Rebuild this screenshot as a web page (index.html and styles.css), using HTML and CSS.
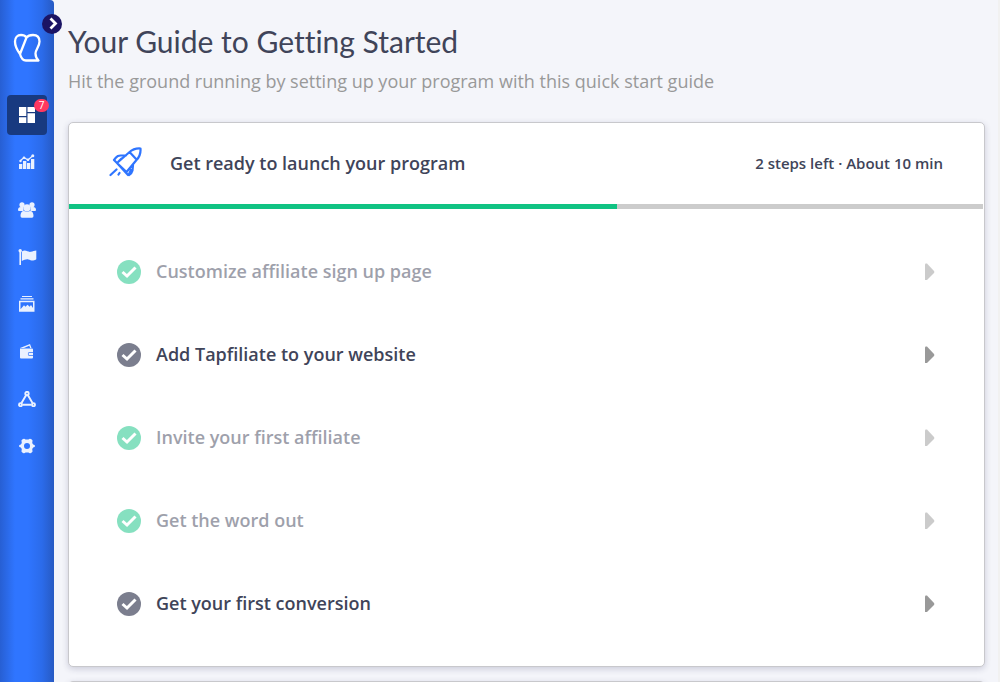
FILE: index.html
```html
<!DOCTYPE html>
<html lang="en">
<head>
<meta charset="utf-8">
<meta name="viewport" content="width=device-width, initial-scale=1">
<title>Your Guide to Getting Started</title>
<link rel="stylesheet" href="styles.css">
</head>
<body>
<svg class="defs" aria-hidden="true">
  <symbol id="check" viewBox="0 0 24 24"><circle cx="12" cy="12" r="12" fill="currentColor"/><path d="M5.500 12l4.500 4 8.500-8.500" fill="none" stroke="#fff" stroke-width="3"/></symbol>
  <symbol id="arrow" viewBox="0 0 10 18"><path d="M0 1.500Q0 .5 1 .5h1L9 8q.8 1 0 2l-7 7H0z" fill="currentColor"/></symbol>
</svg>
<div class="app">
  <aside class="sidebar">
    <a class="logo" href="#" aria-label="Home">
      <svg width="28" height="30" viewBox="0 0 28 30" fill="none" stroke="#fff" stroke-width="2.300" stroke-linejoin="round" stroke-linecap="round"><path d="M7 21C4 17 2 13 2 8.500C2 4.500 4.500 2 8 2c2 0 4 .5 5 2M7 21L13.500 4.500C15 2.500 17 2 20 2c4 0 6.500 2.500 6.500 6.500c0 5-4 8-4 12c0 3 1 5 3 7H13c-3.500 0-5-2.500-6-6.500"/></svg>
    </a>
    <button class="toggle" type="button" aria-label="Expand menu"><svg width="20" height="20" viewBox="0 0 20 20" fill="none" stroke="#fff" stroke-width="2.800"><path d="M8.500 4.500l5 5-5 5"/></svg></button>
    <nav class="menu" aria-label="Main">
      <a class="item active" href="#" aria-label="Dashboard"><svg width="16" height="16" viewBox="0 0 16 16"><path d="M0 0h7.300v9H0zM8.500 0H16v5H8.500zM0 10.200h7.300V16H0zM8.500 6.200H16V16H8.500z"/></svg><span class="badge">7</span></a>
      <a class="item" href="#" aria-label="Reports"><svg width="16" height="16" viewBox="0 0 16 16"><path d="M0 10h3.300v5H0zM4 7h3.300v8H4zM8 9h3.300v6H8zM12 5h3.300v10H12z"/><path d="M1 7l4-3.500L9 6l5-4.500" fill="none" stroke="#fff" stroke-width="1.200"/><circle cx="1.500" cy="7" r="1.200"/><circle cx="5" cy="3.800" r="1.300"/><circle cx="9" cy="5.800" r="1.300"/><circle cx="13.800" cy="1.800" r="1.500"/></svg></a>
      <a class="item" href="#" aria-label="Affiliates"><svg width="18" height="16" viewBox="0 0 18 16"><circle cx="4" cy="2.800" r="2.600"/><circle cx="14" cy="2.800" r="2.600"/><path d="M0 8c0-2 1-3 3-3h2.500v4H1Q0 9 0 8zM18 8c0-2-1-3-3-3h-2.500v4H17q1 0 1-1z"/><circle cx="9" cy="5.800" r="3.600"/><path d="M2.500 14c0-3 1-5 3.500-5 2 1 4 1 6 0 2.500 0 3.500 2 3.500 5q0 1.800-1.500 1.800H4q-1.500 0-1.500-1.800z"/></svg></a>
      <a class="item" href="#" aria-label="Programs"><svg width="19" height="16" viewBox="0 0 19 16"><circle cx="2.200" cy="1.700" r="1.700"/><path d="M1.400 2H3v14H1.400zM3.800 2.500c4-2.500 6 1 9 .3 2-.5 3.500-1.300 5.500-1.300v8.700c-4 2.500-5 1-8 .3-2-.5-4 .5-6.500 1.500z"/></svg></a>
      <a class="item" href="#" aria-label="Assets"><svg width="16" height="16" viewBox="0 0 16 16"><path d="M3 0h10v1H3zM1.500 2.300h13v1.200h-13z"/><path fill-rule="evenodd" d="M0 4.800h15.500v11H0zM1.500 6.300v7l3.500-4 1.500 1.500 2-2 2.200 2L12 9l2 3V6.300z"/></svg></a>
      <a class="item" href="#" aria-label="Payouts"><svg width="16" height="16" viewBox="0 0 16 16"><path d="M1 5L11 1l1.500 4h-1.300L10.300 2.700 5 5z"/><path fill-rule="evenodd" d="M1 5.500h12q1 0 1 1v8q0 1-1 1H2q-1 0-1-1zM10.800 9h3.200v.7h-3.200a1.300 1.300 0 0 0 0 2.600H14v.7h-3.200a2 2 0 0 1 0-4z"/></svg></a>
      <a class="item" href="#" aria-label="Network"><svg class="network" width="18" height="16" viewBox="0 0 18 16" fill="none" stroke="#fff" stroke-width="1.900"><path d="M8.200 4L3.500 12M9.800 4l4.700 8M4.500 13.700h9"/><circle cx="9" cy="2.500" r="1.700"/><circle cx="2.500" cy="13.700" r="1.500"/><circle cx="15.500" cy="13.700" r="1.500"/></svg></a>
      <a class="item" href="#" aria-label="Settings"><svg width="16" height="16" viewBox="0 0 16 16"><path fill-rule="evenodd" d="M4 1q1.500-.8 2.500.5h3Q10.500.2 12 1l1 .8q.9.700.4 2L13.200 5l1 1.500Q16 6.800 16 8t-1.800 1.500l-1 1.500.2 1.200q.5 1.300-.4 2l-1 .8q-1.500.8-2.500-.5h-3Q5.500 15.800 4 15l-1-.8q-.9-.7-.4-2L2.800 11l-1-1.500Q0 9.200 0 8t1.800-1.500l1-1.500-.2-1.200q-.5-1.300.4-2zM8 5a3 3 0 1 0 0 6a3 3 0 0 0 0-6z"/></svg></a>
    </nav>
  </aside>
  <main class="content">
    <h1 class="title">Your Guide to Getting Started</h1>
    <p class="subtitle">Hit the ground running by setting up your program with this quick start guide</p>
    <section class="card">
      <header class="card-head">
        <svg class="rocket" width="34" height="32" viewBox="0 0 34 32" fill="none" stroke="#2f75ff" stroke-width="2.200" stroke-linecap="round" stroke-linejoin="round"><path d="M8 16L20 5.500Q25 1 31.500 1.500q.5 7-4 11.500L17.500 25zM21 5.500L27.500 12.500M17 8.500h-5.500q-3 0-4.500 2l-2 2.500L8 16M9.500 14.500l3-3M8 16l11 12M20 28q3-2 3.500-4.500l.5-5.500M20 27l2-4M7.500 22.500l-6 5.500M10.500 26l-1 1.500"/></svg>
        <h2 class="card-title">Get ready to launch your program</h2>
        <span class="remaining">2 steps left · About 10 min</span>
      </header>
      <div class="progress" role="progressbar" aria-label="Steps completed" aria-valuenow="60" aria-valuemin="0" aria-valuemax="100"><div class="bar" style="width:60%"></div></div>
      <div class="steps">
        <a class="step done" href="#"><svg class="check"><use href="#check"/></svg><span>Customize affiliate sign up page</span><svg class="arrow"><use href="#arrow"/></svg></a>
        <a class="step" href="#"><svg class="check"><use href="#check"/></svg><span>Add Tapfiliate to your website</span><svg class="arrow"><use href="#arrow"/></svg></a>
        <a class="step done" href="#"><svg class="check"><use href="#check"/></svg><span>Invite your first affiliate</span><svg class="arrow"><use href="#arrow"/></svg></a>
        <a class="step done" href="#"><svg class="check"><use href="#check"/></svg><span>Get the word out</span><svg class="arrow"><use href="#arrow"/></svg></a>
        <a class="step" href="#"><svg class="check"><use href="#check"/></svg><span>Get your first conversion</span><svg class="arrow"><use href="#arrow"/></svg></a>
      </div>
    </section>
    <section class="card next"></section>
  </main>
</div>
</body>
</html>
```
FILE: styles.css
```css
* { box-sizing: border-box; }
body {
  margin: 0;
  background: #f4f5fa;
  color: #404459;
  font-family: "Open Sans", "Noto Sans", sans-serif;
}
a { color: inherit; text-decoration: none; }
svg { display: block; flex: none; }
.defs { position: absolute; width: 0; height: 0; }
.app {
  display: flex;
  height: 100vh;
  overflow: hidden;
  border-right: 2px solid #f1f1f1;
}
.sidebar {
  position: relative;
  flex: none;
  width: 54px;
  padding-top: 33px;
  background: linear-gradient(90deg, #275fd3 0, #2f75ff 15px, #2f75ff 28px, #2b6bea 42px, #275ac3 54px);
  border-top-right-radius: 4px;
}
.logo { display: block; width: 28px; margin: 0 auto; }
.toggle {
  position: absolute;
  top: 14px;
  right: -8px;
  width: 20px;
  height: 20px;
  padding: 0;
  border: 0;
  border-radius: 50%;
  background: #1b1464;
}
.menu {
  display: flex;
  flex-direction: column;
  align-items: center;
  justify-content: space-between;
  height: 371px;
  margin-top: 32px;
}
.item {
  position: relative;
  display: flex;
  align-items: center;
  justify-content: center;
  width: 40px;
  height: 40px;
  border-radius: 4px;
  fill: #fff;
}
.item svg { opacity: .9; }
.item .network { fill: none; }
.item.active { background: #183a80; }
.item.active svg { opacity: 1; }
.badge {
  position: absolute;
  top: 4px;
  right: -2px;
  width: 15px;
  height: 13px;
  border-radius: 7px;
  background: #ff3860;
  color: #fff;
  font-size: 10px;
  line-height: 13px;
  text-align: center;
}
.content { flex: 1; min-width: 0; padding: 18px 13px 0 14px; }
.title {
  margin: 0;
  font: 400 30px/46px Lato, sans-serif;
  font-variant-ligatures: none;
}
.subtitle {
  margin: 4px 0 28px;
  color: #999;
  font-size: 18px;
  line-height: 26px;
}
.card {
  border: 1px solid #c8c8cc;
  border-radius: 5px;
  background: #fff;
  box-shadow: 0 2px 6px rgba(40, 40, 90, .2);
}
.card-head {
  display: flex;
  align-items: center;
  height: 81px;
  padding: 0 41px 2px 40px;
}
.card-title {
  flex: 1;
  margin: 0 0 0 27px;
  font-size: 18px;
  font-weight: 600;
}
.remaining { font-size: 15px; font-weight: 600; }
.progress { height: 5px; margin-right: 1px; background: #ccc; }
.bar { height: 100%; background: #10c383; }
.steps { padding: 21px 49px 21px 48px; }
.step {
  display: flex;
  align-items: center;
  gap: 15px;
  height: 83px;
  font-size: 18px;
  font-weight: 600;
}
.step span { flex: 1; padding-bottom: 2px; }
.step.done { opacity: .5; }
.check { width: 24px; height: 24px; color: #7b7e8e; }
.done .check { color: #10c383; }
.arrow { width: 10px; height: 18px; color: #999; }
.next { height: 120px; margin-top: 14px; }
```
